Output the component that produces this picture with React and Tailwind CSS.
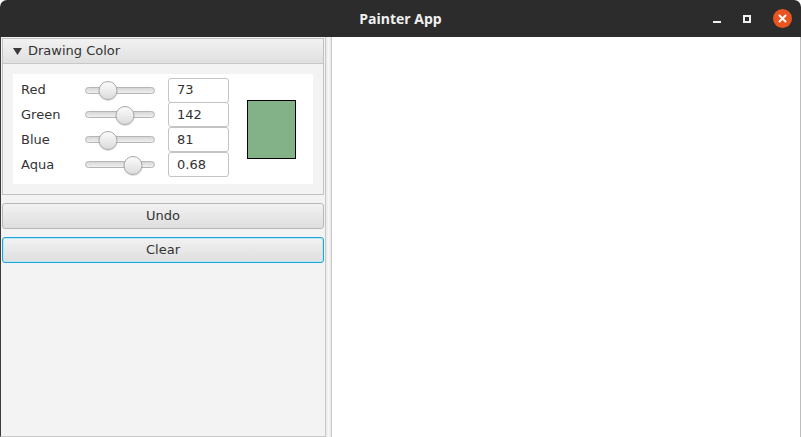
import React from "react";

const rows = [
  { label: "Red", value: "73", pos: 0.33, h: "h-[24px]" },
  { label: "Green", value: "142", pos: 0.57, h: "h-[25px]" },
  { label: "Blue", value: "81", pos: 0.33, h: "h-[25px]" },
  { label: "Aqua", value: "0.68", pos: 0.68, h: "h-[25px]" },
];

function Slider({ pos }) {
  return (
    <div className="relative h-[22px] w-[70px] flex items-center">
      <div className="h-[7px] w-full rounded-full border border-[#b5b5b5] bg-gradient-to-b from-[#d6d6d6] to-[#f0f0f0]" />
      <div
        className="absolute top-[2px] h-[19px] w-[19px] -translate-x-1/2 rounded-full border border-[#a8a8a8] bg-gradient-to-b from-[#fbfbfb] to-[#dcdcdc] shadow-[0_1px_1px_rgba(0,0,0,0.15)]"
        style={{ left: `${pos * 100}%` }}
      />
    </div>
  );
}

export default function App() {
  const font = { fontFamily: '"DejaVu Sans", "Liberation Sans", sans-serif' };
  return (
    <div className="flex h-[437px] w-[801px] flex-col bg-white" style={font}>
      {/* title bar */}
      <div className="relative flex h-[37px] shrink-0 items-center justify-center rounded-t-[7px] bg-[#2c2c2c]">
        <span className="text-[14px] font-bold text-[#f0f0f0]" style={{ fontFamily: '"Open Sans", "DejaVu Sans", sans-serif' }}>
          Painter App
        </span>
        <div className="absolute right-[9px] top-0 flex h-full items-center gap-[22px]">
          <div className="mt-[7px] h-[2px] w-[8px] bg-[#f0f0f0]" />
          <div className="h-[8px] w-[8px] border-[2px] border-[#f0f0f0]" />
          <div className="flex h-[19px] w-[19px] items-center justify-center rounded-full bg-[#e95420]">
            <svg width="9" height="9" viewBox="0 0 9 9">
              <path d="M1.5 1.5 L7.5 7.5 M7.5 1.5 L1.5 7.5" stroke="#fff" strokeWidth="2" strokeLinecap="round" />
            </svg>
          </div>
        </div>
      </div>

      <div className="flex min-h-0 flex-1">
        {/* left pane */}
        <div className="flex w-[325px] shrink-0 flex-col border-l border-b border-[#3a3a3a] border-b-[#c8c8c8] bg-[#f3f3f3] pl-[1px] pr-[1px] pt-[1px]">
          <div className="flex flex-col border border-[#c2c2c2]">
            <div className="flex h-[25px] items-center gap-[6px] border-b border-[#c8c8c8] bg-gradient-to-b from-[#f2f2f2] to-[#e0e0e0] pl-[10px] text-[13px] text-[#333]">
              <svg width="9" height="7" viewBox="0 0 9 7">
                <path d="M0 0 H9 L4.5 7 Z" fill="#3a3a3a" />
              </svg>
              <span>Drawing Color</span>
            </div>
            <div className="bg-[#f3f3f3] px-[10px] py-[10px]">
              <div className="flex items-center bg-white pl-[8px] pt-[4px] pb-[7px]">
                <div className="flex flex-col">
                  {rows.map((r) => (
                    <div key={r.label} className={`flex ${r.h} items-center`}>
                      <span className="w-[64px] text-[13px] text-[#333]">{r.label}</span>
                      <Slider pos={r.pos} />
                      <div className="ml-[13px] flex h-[25px] w-[61px] items-center rounded-[3px] border border-[#c4c4c4] bg-white pl-[8px] text-[13px] text-[#333]">
                        {r.value}
                      </div>
                    </div>
                  ))}
                </div>
                <div className="ml-[18px] mt-[3px] h-[59px] w-[49px] border border-black bg-[rgb(131,178,137)]" />
              </div>
            </div>
          </div>
          <div className="mt-[8px] flex flex-col gap-[8px]">
            <button className="h-[26px] w-full rounded-[3px] border border-[#b8b8b8] bg-gradient-to-b from-[#f2f2f2] to-[#dedede] text-[13px] text-[#333]">
              Undo
            </button>
            <button className="h-[26px] w-full rounded-[3px] border border-[#1aa6dc] bg-gradient-to-b from-[#f2f2f2] to-[#dedede] text-[13px] text-[#333] shadow-[inset_0_0_0_1px_#bfe6f5]">
              Clear
            </button>
          </div>
        </div>

        {/* split divider */}
        <div className="flex w-[7px] shrink-0 border-l border-r border-[#c8c8c8] bg-gradient-to-r from-[#e8e8e8] via-[#f6f6f6] to-[#e8e8e8]" />

        {/* canvas */}
        <div className="flex-1 border-r border-[#bdbdbd] bg-white" />
      </div>
    </div>
  );
}
